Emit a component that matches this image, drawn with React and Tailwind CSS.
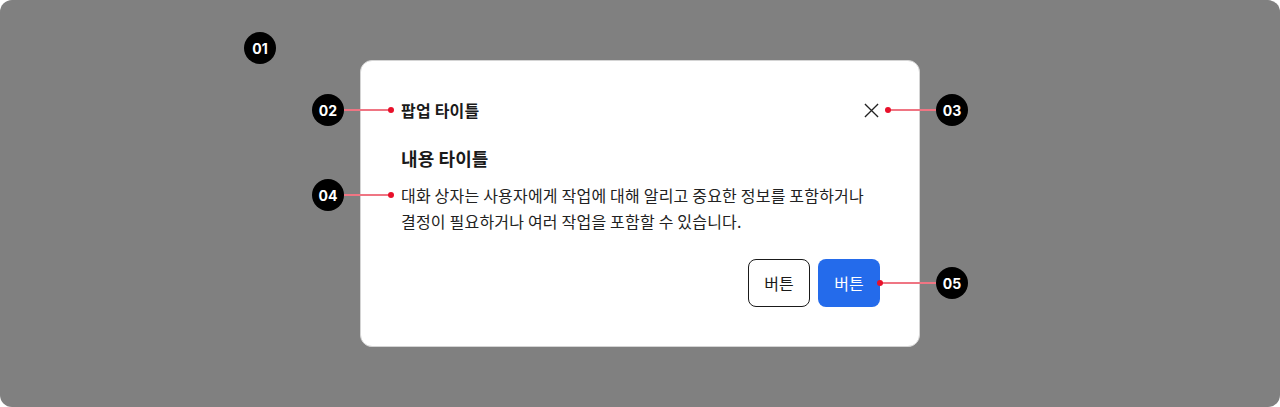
const KR = { fontFamily: '"Noto Sans CJK KR", "Noto Sans", sans-serif' };

function Badge({ n, x, y }) {
  return (
    <div
      className="absolute w-8 h-8 rounded-full bg-black text-white flex items-center justify-center text-[14px] font-bold"
      style={{ left: x - 16, top: y - 16, fontFamily: 'Inter, "Noto Sans", sans-serif' }}
    >
      {n}
    </div>
  );
}

function Pointer({ x1, x2, y, dot }) {
  return (
    <div className="absolute" style={{ left: x1, top: y - 3, width: x2 - x1, height: 6 }}>
      <div className="absolute left-0 right-0 top-[2px] h-[2px] bg-[#ef7583]" />
      <div
        className="absolute top-0 w-[6px] h-[6px] rounded-full bg-[#e8102a]"
        style={dot === 'left' ? { left: -3 } : { right: -3 }}
      />
    </div>
  );
}

export default function App() {
  return (
    <div className="bg-white w-[1280px] h-[407px]" style={KR}>
      <div className="relative h-[407px] rounded-[12px] bg-[#808080] flex items-center justify-center">
        <div className="w-[560px] rounded-xl border border-[#d4d4d4] bg-white pl-10 pr-[39px] pt-[37px] pb-[39px] text-[#1a1a1a]">
          <div className="h-6 flex items-center justify-between">
            <h2 className="text-[16px] tracking-[0.2px] font-bold leading-6">팝업 타이틀</h2>
            <button className="w-6 h-6 flex items-center justify-center -mr-[3px]">
              <svg width="15" height="15" viewBox="0 0 16 16" fill="none" stroke="#222" strokeWidth="1.4">
                <path d="M1 1 L15 15 M15 1 L1 15" />
              </svg>
            </button>
          </div>
          <h3 className="mt-[23px] text-[18px] tracking-[0.1px] font-bold leading-[26px]">내용 타이틀</h3>
          <p className="mt-[11px] text-[16px] tracking-[0.2px] leading-[26px] text-[#222]">
            대화 상자는 사용자에게 작업에 대해 알리고 중요한 정보를 포함하거나
            <br />
            결정이 필요하거나 여러 작업을 포함할 수 있습니다.
          </p>
          <div className="mt-[25px] flex justify-end gap-2">
            <button className="h-12 w-[62px] flex items-center justify-center rounded-lg border border-[#1a1a1a] bg-white text-[16px] text-[#1a1a1a]">
              버튼
            </button>
            <button className="h-12 w-[62px] flex items-center justify-center rounded-lg bg-[#246beb] text-[16px] text-white">
              버튼
            </button>
          </div>
        </div>

        <Badge n="01" x={260} y={48} />
        <Badge n="02" x={328} y={110} />
        <Badge n="03" x={952} y={110} />
        <Badge n="04" x={328} y={195} />
        <Badge n="05" x={952} y={283} />

        <Pointer x1={344} x2={391} y={110} dot="right" />
        <Pointer x1={888} x2={936} y={110} dot="left" />
        <Pointer x1={344} x2={391} y={195} dot="right" />
        <Pointer x1={880} x2={936} y={283} dot="left" />
      </div>
    </div>
  );
}
